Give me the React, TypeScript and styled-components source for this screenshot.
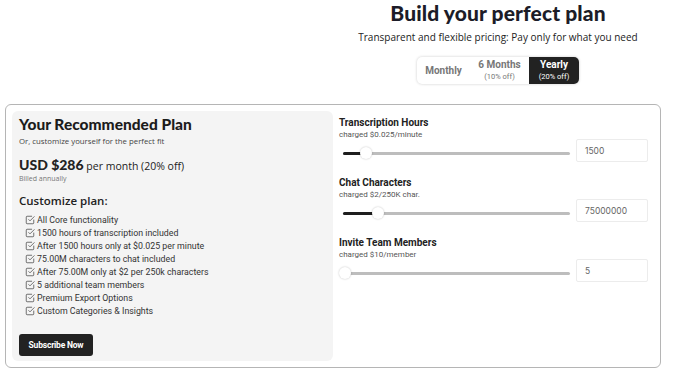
import React from "react";
import styled, { createGlobalStyle } from "styled-components";

const GlobalStyle = createGlobalStyle`
  body {
    margin: 0;
    background: #fff;
    font-family: "Roboto", "Liberation Sans", sans-serif;
    color: #222;
  }
`;

const Page = styled.div`
  width: 700px;
  height: 379px;
  overflow: hidden;
  padding: 0 5px;
  box-sizing: border-box;
`;

const Header = styled.div`
  display: flex;
  flex-direction: column;
  align-items: center;
  margin-left: 293px;
  width: 400px;
`;

const Title = styled.h1`
  margin: 0;
  padding-top: 1px;
  font-family: "Lato", "Open Sans", sans-serif;
  font-weight: 900;
  font-size: 21px;
  line-height: 24px;
  color: #1c1c28;
  letter-spacing: 0.1px;
`;

const Subtitle = styled.p`
  margin: 5px 0 0;
  font-family: "Open Sans", sans-serif;
  font-size: 10px;
  color: #222;
`;

const Toggle = styled.div`
  display: flex;
  margin-top: 13px;
  height: 27px;
  border-radius: 5px;
  box-shadow: 0 0 3px rgba(0, 0, 0, 0.2);
  background: #fff;
`;

const Segment = styled.div<{ $active?: boolean; $w: number }>`
  width: ${(p) => p.$w}px;
  display: flex;
  flex-direction: column;
  align-items: center;
  justify-content: center;
  border-radius: ${(p) => (p.$active ? "0 5px 5px 0" : "0")};
  background: ${(p) => (p.$active ? "#222" : "transparent")};
  color: ${(p) => (p.$active ? "#fff" : "#777")};
  font-family: "Roboto", sans-serif;
`;

const SegLabel = styled.span`
  font-size: 10px;
  font-weight: 700;
  line-height: 12px;
`;

const SegNote = styled.span`
  font-size: 7.5px;
  line-height: 11px;
`;

const Card = styled.div`
  margin-top: 20px;
  width: 656px;
  height: 264px;
  box-sizing: border-box;
  border: 1px solid #b5b5b5;
  border-radius: 6px;
  padding: 6px;
  display: flex;
  gap: 6px;
`;

const PlanPanel = styled.div`
  width: 321px;
  flex: none;
  background: #f4f4f4;
  border-radius: 6px;
  padding: 4px 7px 5px 7px;
  box-sizing: border-box;
  display: flex;
  flex-direction: column;
`;

const PlanTitle = styled.h2`
  margin: 0;
  font-family: "Lato", sans-serif;
  font-weight: 900;
  font-size: 15.5px;
  line-height: 19px;
  color: #1c1c1c;
`;

const Small = styled.div`
  font-family: "Open Sans", sans-serif;
  font-size: 7.8px;
  color: #444;
  margin-top: 2px;
`;

const Price = styled.div`
  margin-top: 11px;
  font-family: "Open Sans", sans-serif;
  font-size: 10.5px;
  color: #222;
  line-height: 16px;
`;

const PriceStrong = styled.span`
  font-family: "Lato", sans-serif;
  font-weight: 900;
  font-size: 14px;
`;

const Billed = styled.div`
  font-family: "Open Sans", sans-serif;
  font-size: 7px;
  color: #777;
`;

const SectionTitle = styled.div`
  margin-top: 10px;
  font-family: "Open Sans", sans-serif;
  font-weight: 600;
  font-size: 11.5px;
  color: #222;
`;

const FeatureList = styled.ul`
  list-style: none;
  margin: 5px 0 0;
  padding: 0 0 0 6px;
`;

const Feature = styled.li`
  display: flex;
  align-items: center;
  gap: 2px;
  height: 13px;
  font-family: "Roboto", sans-serif;
  font-size: 8.8px;
  color: #333;
`;

const Button = styled.button`
  margin-top: auto;
  align-self: flex-start;
  width: 74px;
  height: 22px;
  border: none;
  border-radius: 3px;
  background: #222;
  color: #fff;
  font-family: "Roboto", sans-serif;
  font-weight: 700;
  font-size: 8.5px;
  letter-spacing: -0.2px;
`;

const Controls = styled.div`
  flex: 1;
  padding-top: 5px;
  display: flex;
  flex-direction: column;
  gap: 14px;
`;

const Control = styled.div`
  display: flex;
  flex-direction: column;
`;

const ControlTitle = styled.div`
  font-family: "Roboto", sans-serif;
  font-weight: 700;
  font-size: 10px;
  color: #222;
  line-height: 13px;
`;

const ControlNote = styled.div`
  font-family: "Roboto", sans-serif;
  font-size: 8px;
  color: #555;
  margin-top: 1px;
`;

const SliderRow = styled.div`
  display: flex;
  align-items: center;
  gap: 6px;
`;

const Track = styled.div`
  position: relative;
  margin-left: 4px;
  width: 227px;
  height: 3px;
  border-radius: 2px;
  background: #bdbdbd;
  margin-top: 6px;
`;

const Fill = styled.div`
  height: 100%;
  background: #1e1e1e;
  border-radius: 2px;
`;

const Thumb = styled.div`
  position: absolute;
  top: -5px;
  width: 12px;
  height: 12px;
  margin-left: -6px;
  border-radius: 50%;
  background: #fff;
  box-shadow: 0 0 2px rgba(0, 0, 0, 0.25);
`;

const ValueBox = styled.div`
  width: 72px;
  height: 23px;
  box-sizing: border-box;
  border: 1px solid #ececec;
  border-radius: 2px;
  padding-left: 8px;
  display: flex;
  align-items: center;
  font-family: "Inter", sans-serif;
  font-size: 8.5px;
  color: #666;
`;

const CheckIcon = () => (
  <svg width="10" height="10" viewBox="0 0 24 24" fill="none" stroke="#555" strokeWidth="2" strokeLinecap="round" strokeLinejoin="round">
    <polyline points="9 11 12 14 22 4" />
    <path d="M21 12v7a2 2 0 0 1-2 2H5a2 2 0 0 1-2-2V5a2 2 0 0 1 2-2h11" />
  </svg>
);

const features = [
  "All Core functionality",
  "1500 hours of transcription included",
  "After 1500 hours only at $0.025 per minute",
  "75.00M characters to chat included",
  "After 75.00M only at $2 per 250k characters",
  "5 additional team members",
  "Premium Export Options",
  "Custom Categories & Insights",
];

const controls = [
  { title: "Transcription Hours", note: "charged $0.025/minute", value: "1500", pos: 23 },
  { title: "Chat Characters", note: "charged $2/250K char.", value: "75000000", pos: 35 },
  { title: "Invite Team Members", note: "charged $10/member", value: "5", pos: 2 },
];

export default function App() {
  return (
    <Page>
      <GlobalStyle />
      <Header>
        <Title>Build your perfect plan</Title>
        <Subtitle>Transparent and flexible pricing: Pay only for what you need</Subtitle>
        <Toggle>
          <Segment $w={53}>
            <SegLabel>Monthly</SegLabel>
          </Segment>
          <Segment $w={59}>
            <SegLabel>6 Months</SegLabel>
            <SegNote>(10% off)</SegNote>
          </Segment>
          <Segment $w={50} $active>
            <SegLabel>Yearly</SegLabel>
            <SegNote>(20% off)</SegNote>
          </Segment>
        </Toggle>
      </Header>
      <Card>
        <PlanPanel>
          <PlanTitle>Your Recommended Plan</PlanTitle>
          <Small>Or, customize yourself for the perfect fit</Small>
          <Price>
            <PriceStrong>USD $286</PriceStrong> per month (20% off)
          </Price>
          <Billed>Billed annually</Billed>
          <SectionTitle>Customize plan:</SectionTitle>
          <FeatureList>
            {features.map((f) => (
              <Feature key={f}>
                <CheckIcon />
                {f}
              </Feature>
            ))}
          </FeatureList>
          <Button>Subscribe Now</Button>
        </PlanPanel>
        <Controls>
          {controls.map((c) => (
            <Control key={c.title}>
              <ControlTitle>{c.title}</ControlTitle>
              <ControlNote>{c.note}</ControlNote>
              <SliderRow>
                <Track>
                  <Fill style={{ width: c.pos }} />
                  <Thumb style={{ left: c.pos }} />
                </Track>
                <ValueBox>{c.value}</ValueBox>
              </SliderRow>
            </Control>
          ))}
        </Controls>
      </Card>
    </Page>
  );
}
